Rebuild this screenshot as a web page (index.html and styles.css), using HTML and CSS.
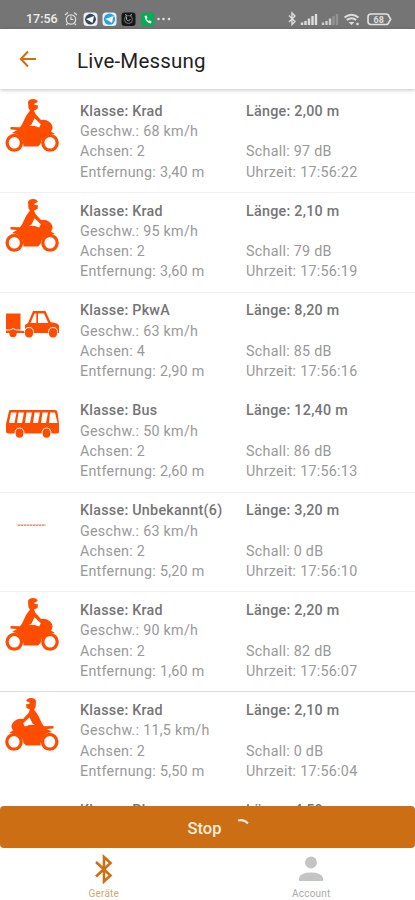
FILE: index.html
```html
<!DOCTYPE html>
<html lang="de">
<head>
	<title>Live-Messung</title>
	<meta charset="UTF-8">
	<meta name="viewport" content="width=device-width, initial-scale=1">
	<link rel="stylesheet" href="styles.css">
</head>

<body>
	<!-- vehicle symbols -->
	<svg class="symbols" aria-hidden="true">
		<symbol id="krad" viewBox="0 0 70 65">
			<path fill="#ff4d00" d="M28 6q1-3 5-3 4 0 4.800 3l-3.300 1.500v1.500l3.500.3-.5 3.700-3.500 1.500 1.500 3.500 5.500 6q5-.8 8.500 2 3.500 3 3 6.500l-1.500 3L55 38q-13-1-14.500 10l-2.500 2.500H23.500Q23 38 12 37l5-3-6.500-.5V31l9.500.3 2-2.800 4-8.500 4-5.500-1.500-2z"/>
			<path fill="#fff" d="M29 29.800l2.500-1.300 3-6.200 6.300 6-1.600 3.200-4.500-1.600z"/>
			<ellipse cx="14.300" cy="46.800" rx="7.200" ry="7.400" fill="#fff" stroke="#ff4d00" stroke-width="3.300"/>
			<ellipse cx="50" cy="46.800" rx="7.200" ry="7.400" fill="#fff" stroke="#ff4d00" stroke-width="3.300"/>
		</symbol>
		<symbol id="pkwa" viewBox="0 0 70 50">
			<path fill="#ff4d00" d="M6 18.500h14.500V36H25v-6l3-2 5-12h12.500l5 11 6.500 1.500 2 2V38H6z"/>
			<path fill="#fff" d="M30.500 28l4-9.500h1.800V28zM38 28v-9.500h6L48.300 28z"/>
			<path stroke="#fff" fill="none" d="M6 35h4q3-3 6 0h5M24.500 37.500q0-5 4.500-5t4.500 5M48.500 37.500q0-5 4.500-5t4.500 5"/>
			<circle cx="13" cy="38.500" r="3.700" fill="#ff4d00"/>
			<circle cx="29" cy="38.500" r="4" fill="#ff4d00"/>
			<circle cx="53" cy="38.500" r="4" fill="#ff4d00"/>
		</symbol>
		<symbol id="bus" viewBox="0 0 70 50">
			<path fill="#ff4d00" d="M9 16q0-1 2-1h44q2 0 2.500 2l1.500 12v8q0 1.500-2 1.500H8q-2 0-2-2V29z"/>
			<path fill="#fff" d="M11 17.500h5.500L14.500 28H9zM18.500 17.500H24L22 28h-5zM26.500 17.500H32L30 28h-5zM34.500 17.500H40L38 28h-5zM42.500 17.500H48L46 28h-5zM50 17.500h5L57.500 28H49z"/>
			<path stroke="#fff" fill="none" d="M15 39q0-6 4.500-6t4.500 6M42 39q0-6 4.500-6t4.500 6"/>
			<circle cx="19.500" cy="39" r="3.800" fill="#ff4d00"/>
			<circle cx="46.500" cy="39" r="3.800" fill="#ff4d00"/>
		</symbol>
		<symbol id="unbekannt" viewBox="0 0 70 50">
			<path d="M16.500 30H46" fill="none" stroke="#eeb391" stroke-width="1.200"/>
			<path d="M18 30.300H45" fill="none" stroke="#d98c62" stroke-width="1" stroke-dasharray="2 1"/>
		</symbol>
	</svg>

	<div class="screen">
		<div class="statusbar">
			<span class="clock">17:56</span>
			<svg class="status-left" width="112" height="16" viewBox="0 0 112 16">
				<g fill="none" stroke="#ddd" stroke-width="1.200">
					<circle cx="7" cy="8.500" r="4.700"/>
					<path d="M7 5.500v3h2.500M1 4l3-2.500M13 4l-3-2.500M3.500 12.500L2 14M10.500 12.500L12 14"/>
				</g>
				<rect x="19.500" y="1.500" width="14" height="13.500" rx="3.500" fill="#eee"/>
				<circle cx="26.500" cy="8.200" r="5.400" fill="#34465f"/>
				<path d="M22 8l8-3-1.500 7-3-2z" fill="#fff"/>
				<rect x="38.500" y="1.500" width="14" height="13.500" rx="3.500" fill="#eee"/>
				<circle cx="45.500" cy="8.200" r="5.600" fill="#28a5df"/>
				<path d="M41.500 8l8-3-1.500 7-3-2z" fill="#fff"/>
				<rect x="57.500" y="1.500" width="14" height="13.500" rx="3" fill="#171717"/>
				<circle cx="64.500" cy="8.500" r="4" fill="none" stroke="#777"/>
				<path d="M62.500 6v2.500l2 1.500 2-2M61 3.500l2 1M68 3.500l-2 1" fill="none" stroke="#aaa"/>
				<rect x="77" y="1.500" width="13.500" height="13.500" rx="3" fill="#0baa56"/>
				<path d="M80.500 5l2-.5 1 2.500-1 1 2 2 1.200-.8 2 1.500-1 1.800q-5-.5-6.200-7.500z" fill="#fff"/>
				<g fill="#ddd"><circle cx="94.500" cy="8" r="1.300"/><circle cx="99.500" cy="8" r="1.300"/><circle cx="105" cy="8" r="1.300"/></g>
			</svg>
			<svg class="status-right" width="108" height="16" viewBox="0 0 108 16">
				<path d="M2 4.500l6 6-3 3V2l3 3-6 6" fill="none" stroke="#ddd" stroke-width="1.400"/>
				<path d="M15 14v-2.500M18.500 14v-4M22 14V7.500M25.500 14V5M29 14V3" stroke="#ddd" stroke-width="2.400"/>
				<path d="M36 14v-2.500M39.500 14v-4M43 14V7.500" stroke="#ccc" stroke-width="2.400"/>
				<path d="M46.500 14V5M50 14V3" stroke="#929292" stroke-width="2.400"/>
				<path d="M57.500 6.500q7-5.500 14 0M59.800 9q4.700-3.500 9.400 0" fill="none" stroke="#ddd" stroke-width="2"/>
				<path d="M61.500 11h6l-3 3z" fill="#ddd"/>
				<circle cx="70.500" cy="13" r="1.300" fill="#ddd"/>
				<path d="M84 3h15q2.500 0 3 2.500l1.700 2.800-1.700 2.700q-.5 2.500-3 2.500H84q-3 0-3-3V6q0-3 3-3z" fill="none" stroke="#e2e2e2" stroke-width="1.600"/>
				<text class="battery" x="86.500" y="11.600">68</text>
			</svg>
		</div>

		<header class="appbar">
			<svg class="back" width="18" height="18" viewBox="0 0 18 18">
				<path d="M17 9H2M9 1.500L1.800 9 9 16.500" fill="none" stroke="#cc7011" stroke-width="2"/>
			</svg>
			<h1>Live-Messung</h1>
		</header>

		<main class="list">
			<section class="row">
				<svg class="icon bike"><use href="#krad"/></svg>
				<div class="left">
					<b>Klasse: Krad</b>
					<span>Geschw.: 68 km/h</span>
					<span>Achsen: 2</span>
					<span>Entfernung: 3,40 m</span>
				</div>
				<div class="right">
					<b>Länge: 2,00 m</b>
					<span class="sound">Schall: 97 dB</span>
					<span>Uhrzeit: 17:56:22</span>
				</div>
			</section>
			<section class="row">
				<svg class="icon bike"><use href="#krad"/></svg>
				<div class="left">
					<b>Klasse: Krad</b>
					<span>Geschw.: 95 km/h</span>
					<span>Achsen: 2</span>
					<span>Entfernung: 3,60 m</span>
				</div>
				<div class="right">
					<b>Länge: 2,10 m</b>
					<span class="sound">Schall: 79 dB</span>
					<span>Uhrzeit: 17:56:19</span>
				</div>
			</section>
			<section class="row plain">
				<svg class="icon"><use href="#pkwa"/></svg>
				<div class="left">
					<b>Klasse: PkwA</b>
					<span>Geschw.: 63 km/h</span>
					<span>Achsen: 4</span>
					<span>Entfernung: 2,90 m</span>
				</div>
				<div class="right">
					<b>Länge: 8,20 m</b>
					<span class="sound">Schall: 85 dB</span>
					<span>Uhrzeit: 17:56:16</span>
				</div>
			</section>
			<section class="row">
				<svg class="icon"><use href="#bus"/></svg>
				<div class="left">
					<b>Klasse: Bus</b>
					<span>Geschw.: 50 km/h</span>
					<span>Achsen: 2</span>
					<span>Entfernung: 2,60 m</span>
				</div>
				<div class="right">
					<b>Länge: 12,40 m</b>
					<span class="sound">Schall: 86 dB</span>
					<span>Uhrzeit: 17:56:13</span>
				</div>
			</section>
			<section class="row">
				<svg class="icon"><use href="#unbekannt"/></svg>
				<div class="left">
					<b>Klasse: Unbekannt(6)</b>
					<span>Geschw.: 63 km/h</span>
					<span>Achsen: 2</span>
					<span>Entfernung: 5,20 m</span>
				</div>
				<div class="right">
					<b>Länge: 3,20 m</b>
					<span class="sound">Schall: 0 dB</span>
					<span>Uhrzeit: 17:56:10</span>
				</div>
			</section>
			<section class="row strong">
				<svg class="icon bike"><use href="#krad"/></svg>
				<div class="left">
					<b>Klasse: Krad</b>
					<span>Geschw.: 90 km/h</span>
					<span>Achsen: 2</span>
					<span>Entfernung: 1,60 m</span>
				</div>
				<div class="right">
					<b>Länge: 2,20 m</b>
					<span class="sound">Schall: 82 dB</span>
					<span>Uhrzeit: 17:56:07</span>
				</div>
			</section>
			<section class="row plain">
				<svg class="icon bike flip"><use href="#krad"/></svg>
				<div class="left">
					<b>Klasse: Krad</b>
					<span>Geschw.: 11,5 km/h</span>
					<span>Achsen: 2</span>
					<span>Entfernung: 5,50 m</span>
				</div>
				<div class="right">
					<b>Länge: 2,10 m</b>
					<span class="sound">Schall: 0 dB</span>
					<span>Uhrzeit: 17:56:04</span>
				</div>
			</section>
			<section class="row">
				<div class="icon"></div>
				<div class="left">
					<b>Klasse: Pkw</b>
				</div>
				<div class="right">
					<b>Länge: 4,50 m</b>
				</div>
			</section>
		</main>

		<button type="button" class="stop">
			<span>Stop</span>
			<svg width="16" height="20" viewBox="0 0 16 20">
				<path d="M3 2.500q6-1.500 10 3" fill="none" stroke="#f8e6d2" stroke-width="2"/>
			</svg>
		</button>

		<nav class="tabs">
			<a class="tab active">
				<svg width="30" height="30" viewBox="0 0 30 30">
					<path d="M7 8l14.500 13.500L15 27.500V3l6.500 6L7 22.500" fill="none" stroke="#cc7011" stroke-width="2.600"/>
				</svg>
				<span>Geräte</span>
			</a>
			<a class="tab">
				<svg width="30" height="30" viewBox="0 0 30 30">
					<circle cx="15" cy="8.500" r="5.900" fill="#c4c4c4"/>
					<path d="M3 27v-3q1.500-5.500 12-5.500t12 5.500v3z" fill="#c4c4c4"/>
				</svg>
				<span>Account</span>
			</a>
		</nav>
	</div>
</body>
</html>
```
FILE: styles.css
```css
body {
    margin: 0;
    font-family: Roboto, "Liberation Sans", sans-serif;
    background-color: #fff;
}

.symbols {
    display: none;
}

.screen {
    display: flex;
    flex-direction: column;
    width: 415px;
    height: 900px;
    overflow: hidden;
}

.statusbar {
    display: flex;
    flex: none;
    align-items: center;
    height: 29px;
    padding: 8px 20px 0 26px;
    box-sizing: border-box;
    background-color: #757575;
    color: #eee;
}

.clock {
    width: 38px;
    font-size: 12.5px;
    font-weight: 500;
}

.status-right {
    margin-left: auto;
}

.battery {
    font-size: 9px;
    font-weight: bold;
    fill: #ddd;
}

.appbar {
    display: flex;
    flex: none;
    align-items: center;
    height: 60px;
    padding-left: 19px;
    box-shadow: 0 1px 4px rgba(0, 0, 0, 0.25);
    z-index: 1;
}

.appbar h1 {
    margin: 3px 0 0 40px;
    font-size: 20.5px;
    font-weight: normal;
    letter-spacing: 0.2px;
    color: #222;
}

.list {
    flex: none;
    height: 717px;
    padding-top: 4px;
    box-sizing: border-box;
    overflow: hidden;
}

.row {
    display: grid;
    grid-template-columns: 80px 166px 1fr;
    height: 99.9px;
    padding-top: 7.7px;
    box-sizing: border-box;
    border-bottom: 1px solid #f0f0f0;
    font-size: 14.3px;
    line-height: 20.3px;
    letter-spacing: 0.27px;
    color: #999;
}

.row.plain {
    border-bottom-color: transparent;
}

.row.strong {
    border-bottom-color: #ddd;
}

.row b {
    font-weight: 500;
    color: #757575;
}

.left,
.right {
    display: flex;
    flex-direction: column;
    white-space: nowrap;
}

.sound {
    margin-top: 20.3px;
}

.icon {
    width: 70px;
    height: 50px;
    margin-top: -5px;
}

.icon.bike {
    height: 65px;
}

.flip {
    transform: translateX(-6px) scaleX(-1);
}

.stop {
    display: flex;
    flex: none;
    align-items: center;
    justify-content: center;
    gap: 14px;
    height: 42px;
    padding: 2px 0 0 24px;
    border: none;
    border-radius: 4px;
    background-color: #cc6e14;
    color: #fbeedd;
    font-family: inherit;
    font-size: 16.5px;
    font-weight: 500;
}

.tabs {
    display: flex;
    flex: 1;
}

.tab {
    display: flex;
    flex: 1;
    flex-direction: column;
    align-items: center;
    padding-top: 6px;
    font-size: 10px;
    letter-spacing: 0.2px;
    color: #aaa;
}

.tab span {
    margin-top: 4px;
}

.tab.active {
    color: #d4a66c;
}
```
